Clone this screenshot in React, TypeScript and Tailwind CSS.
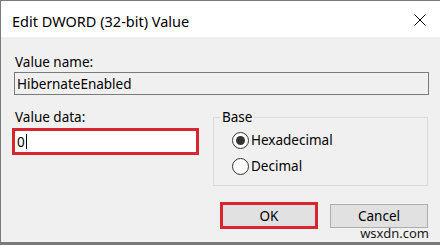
import React from "react";

const font = { fontFamily: '"Noto Sans", "Open Sans", sans-serif' };

function Radio({ checked, label }: { checked?: boolean; label: string }) {
  return (
    <div className="flex items-center h-4 leading-4">
      <span className="w-[17px] h-[17px] rounded-full border border-[#333] bg-white flex items-center justify-center">
        {checked && <span className="w-[9px] h-[9px] rounded-full bg-[#333]" />}
      </span>
      <span className="ml-[2px]">{label}</span>
    </div>
  );
}

export default function App() {
  return (
    <div className="w-[440px] h-[245px] bg-[#f0f0f0] text-black text-[13.5px] leading-4" style={font}>
      <div className="relative h-[245px] border-t border-l border-b-[3px] border-[#7a7a7a] flex flex-col">
        {/* Title bar */}
        <div className="h-[36px] bg-white flex items-start justify-between pl-[11px] pt-[10px] pr-[14px]">
          <span className="text-[14.5px] leading-5">Edit DWORD (32-bit) Value</span>
          <svg width="12" height="12" viewBox="0 0 12 12" className="mt-[3px]">
            <path d="M0.5 0.5 L11.5 11.5 M11.5 0.5 L0.5 11.5" stroke="#000" strokeWidth="1" />
          </svg>
        </div>

        {/* Body */}
        <div className="flex-1 bg-[#f0f0f0] pl-[11px] pr-[11px] pt-[17px]">
          <div className="pl-[3px]">Value name:</div>
          <div className="mt-[2px] ml-[2px] h-[23px] border border-[#7a7a7a] bg-[#f0f0f0] flex items-center pl-[2px]">
            HibernateEnabled
          </div>

          <div className="mt-[14px] flex items-start">
            <div className="w-[187px]">
              <div className="pl-[3px]">Value data:</div>
              <div className="mt-[3px] h-[27px] border-[3px] border-[#d82630] bg-white flex items-center pl-[2px]">
                <span>0</span>
                <span className="w-px h-[15px] bg-black ml-[1px]" />
              </div>
            </div>

            <fieldset className="ml-[14px] w-[215px] h-[77px] border border-[#dcdcdc]">
              <legend className="ml-[6px] px-[2px]">Base</legend>
              <div className="pl-[18px] pt-[7px] flex flex-col gap-[10px]">
                <Radio checked label="Hexadecimal" />
                <Radio label="Decimal" />
              </div>
            </fieldset>
          </div>

          <div className="mt-[16px] flex justify-end items-center gap-[12px] pr-[1px]">
            <button className="w-[98px] h-[27px] border-[3px] border-[#d82630] bg-[#e1e1e1] leading-4">OK</button>
            <button className="w-[98px] h-[24px] border border-[#adadad] bg-[#e1e1e1] leading-4">Cancel</button>
          </div>
        </div>

        {/* watermark */}
        <span className="absolute right-[11px] bottom-[1px] text-[13px] leading-4 text-[#1a1a1a]">wsxdn.com</span>
      </div>
    </div>
  );
}
